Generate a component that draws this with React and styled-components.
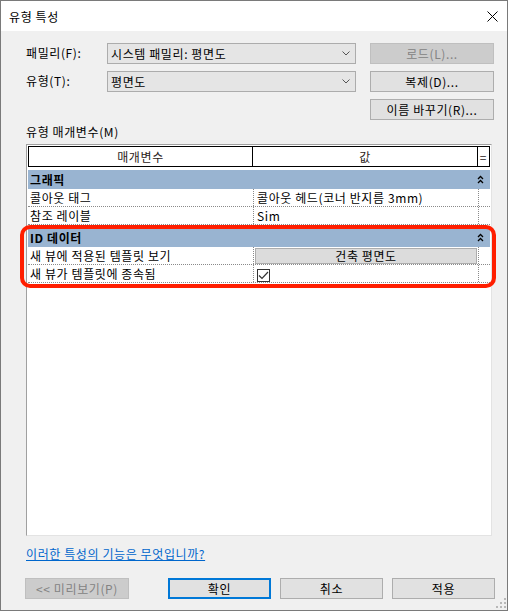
import React from "react";
import styled, { createGlobalStyle, css } from "styled-components";

const GlobalStyle = createGlobalStyle`
  html, body {
    margin: 0;
    padding: 0;
    background: #ffffff;
  }
`;

const Window = styled.div`
  position: relative;
  width: 508px;
  height: 611px;
  box-sizing: border-box;
  border: 1px solid #7a7a7a;
  background: #f0f0f0;
  display: flex;
  flex-direction: column;
  font-family: "Noto Sans CJK KR", "Noto Sans", sans-serif;
  font-size: 12px;
  letter-spacing: 0.6px;
  color: #000;
`;

const TitleBar = styled.div`
  height: 30px;
  background: #ffffff;
  display: flex;
  align-items: center;
  justify-content: space-between;
  padding: 0 9px 0 8px;
`;

const Title = styled.span`
  font-size: 12px;
`;

const Body = styled.div`
  flex: 1;
  display: flex;
  flex-direction: column;
  padding: 12px 12px 0 25px;
`;

const TopGrid = styled.div`
  display: grid;
  grid-template-columns: 67px 249px 124px;
  grid-auto-rows: 21px;
  column-gap: 14px;
  row-gap: 7px;
  align-items: center;
`;

const Label = styled.span`
  line-height: 16px;
  margin-top: -2px;
  white-space: nowrap;
`;

const Combo = styled.div`
  height: 21px;
  box-sizing: border-box;
  border: 1px solid #acacac;
  background: #e5e5e5;
  display: flex;
  align-items: center;
  justify-content: space-between;
  padding: 0 5px 0 3px;
`;

const Button = styled.button`
  height: 21px;
  width: ${(props) => props.width || 124}px;
  box-sizing: border-box;
  margin: 0;
  padding: 0;
  font-family: inherit;
  font-size: 12px;
  letter-spacing: inherit;
  color: #000;
  background: #e1e1e1;
  border: 1px solid #adadad;
  ${(props) =>
    props.disabled &&
    css`
      background: #cccccc;
      border-color: #bfbfbf;
      color: #838383;
    `}
  ${(props) =>
    props.primary &&
    css`
      border: 2px solid #0078d7;
    `}
`;

const SectionLabel = styled.div`
  margin-top: 4px;
  height: 16px;
  line-height: 16px;
`;

const Table = styled.div`
  margin-top: 4px;
  width: 466px;
  height: 392px;
  box-sizing: border-box;
  background: #ffffff;
  border-top: 1px solid #a0a0a0;
  border-left: 1px solid #a0a0a0;
  border-bottom: 1px solid #e3e3e3;
  border-right: 1px solid #e3e3e3;
  padding: 1px;
`;

const HeaderRow = styled.div`
  display: grid;
  grid-template-columns: 224px 225px 12px;
  height: 21px;
  box-sizing: border-box;
  border-top: 1px solid #000;
  border-bottom: 1px solid #000;
  border-left: 1px solid #000;
`;

const HeaderCell = styled.div`
  border-right: 1px solid #000;
  display: flex;
  align-items: center;
  justify-content: center;
  color: #2b2220;
  line-height: 1;
`;

const Group = styled.div`
  margin-top: 3px;
  position: relative;

  ${(props) =>
    props.highlight &&
    css`
      &::after {
        content: "";
        position: absolute;
        top: -3px;
        bottom: -5px;
        left: -8px;
        right: -6px;
        border: 4px solid #ff1e00;
        border-radius: 10px;
        pointer-events: none;
      }
    `}
`;

const GroupBar = styled.div`
  height: 19px;
  width: 462px;
  background: #99b4d1;
  display: flex;
  align-items: center;
  justify-content: space-between;
  padding: 0 6px 0 2px;
  box-sizing: border-box;
  font-weight: 700;
`;

const Row = styled.div`
  display: grid;
  grid-template-columns: 225px 225px 12px;
  height: 18px;
  box-sizing: border-box;
  border-bottom: 1px dotted #8a8a8a;
`;

const Cell = styled.div`
  display: flex;
  align-items: center;
  padding-left: ${(props) => (props.first ? 2 : 3)}px;
  border-left: ${(props) => (props.first ? "none" : "1px dotted #8a8a8a")};
  white-space: nowrap;
  overflow: hidden;
`;

const ValueButton = styled.div`
  flex: 1;
  height: 16px;
  margin: 0 1px 0 -2px;
  box-sizing: border-box;
  background: #dcdcdc;
  border: 1px solid #adadad;
  display: flex;
  align-items: center;
  justify-content: center;
`;

const CheckBox = styled.div`
  width: 13px;
  height: 13px;
  box-sizing: border-box;
  border: 1px solid #333;
  background: #fff;
  display: flex;
  align-items: center;
  justify-content: center;
  margin-top: 4px;
`;

const HelpLink = styled.a`
  margin-top: 10px;
  height: 16px;
  line-height: 16px;
  color: #0066cc;
  text-decoration: underline;
  align-self: flex-start;
`;

const Footer = styled.div`
  margin-top: 16px;
  display: flex;
  justify-content: space-between;
  margin-left: -1px;
`;

const ButtonGroup = styled.div`
  display: flex;
  gap: 9px;
`;

const Grip = styled.svg`
  position: absolute;
  right: 1px;
  bottom: 2px;
`;

function ChevronDown() {
  return (
    <svg width="8" height="5" viewBox="0 0 8 5">
      <polyline points="0.5,0.5 4,4 7.5,0.5" fill="none" stroke="#555" strokeWidth="1" />
    </svg>
  );
}

function Collapse() {
  return (
    <svg width="7" height="9" viewBox="0 0 7 9">
      <polyline points="1,4 3.5,1.5 6,4" fill="none" stroke="#000" strokeWidth="1.3" />
      <polyline points="1,8 3.5,5.5 6,8" fill="none" stroke="#000" strokeWidth="1.3" />
    </svg>
  );
}

function CloseIcon() {
  return (
    <svg width="11" height="11" viewBox="0 0 11 11">
      <path d="M0.5 0.5 L10.5 10.5 M10.5 0.5 L0.5 10.5" stroke="#000" strokeWidth="1" />
    </svg>
  );
}

function Check() {
  return (
    <svg width="11" height="9" viewBox="0 0 11 9">
      <polyline points="1,4.5 4,7.5 10,1" fill="none" stroke="#333" strokeWidth="1.2" />
    </svg>
  );
}

const groups = [
  {
    name: "그래픽",
    rows: [
      { label: "콜아웃 태그", value: "콜아웃 헤드(코너 반지름 3mm)" },
      { label: "참조 레이블", value: "Sim" },
    ],
  },
  {
    name: "ID 데이터",
    highlight: true,
    rows: [
      { label: "새 뷰에 적용된 템플릿 보기", value: "건축 평면도", kind: "button" },
      { label: "새 뷰가 템플릿에 종속됨", kind: "check" },
    ],
  },
];

function ValueContent({ row }) {
  if (row.kind === "button") return <ValueButton>{row.value}</ValueButton>;
  if (row.kind === "check")
    return (
      <CheckBox>
        <Check />
      </CheckBox>
    );
  return row.value;
}

export default function App() {
  return (
    <>
      <GlobalStyle />
      <Window>
        <TitleBar>
          <Title>유형 특성</Title>
          <CloseIcon />
        </TitleBar>
        <Body>
          <TopGrid>
            <Label>패밀리(F):</Label>
            <Combo>
              <span>시스템 패밀리: 평면도</span>
              <ChevronDown />
            </Combo>
            <Button disabled>로드(L)...</Button>

            <Label>유형(T):</Label>
            <Combo>
              <span>평면도</span>
              <ChevronDown />
            </Combo>
            <Button>복제(D)...</Button>

            <span />
            <span />
            <Button>이름 바꾸기(R)...</Button>
          </TopGrid>

          <SectionLabel>유형 매개변수(M)</SectionLabel>
          <Table>
            <HeaderRow>
              <HeaderCell>매개변수</HeaderCell>
              <HeaderCell>값</HeaderCell>
              <HeaderCell>=</HeaderCell>
            </HeaderRow>
            {groups.map((group) => (
              <Group key={group.name} highlight={group.highlight}>
                <GroupBar>
                  <span>{group.name}</span>
                  <Collapse />
                </GroupBar>
                {group.rows.map((row) => (
                  <Row key={row.label}>
                    <Cell first>{row.label}</Cell>
                    <Cell>
                      <ValueContent row={row} />
                    </Cell>
                    <Cell />
                  </Row>
                ))}
              </Group>
            ))}
          </Table>

          <HelpLink href="#">이러한 특성의 기능은 무엇입니까?</HelpLink>

          <Footer>
            <Button disabled width={104}>
              &lt;&lt; 미리보기(P)
            </Button>
            <ButtonGroup>
              <Button primary width={103}>
                확인
              </Button>
              <Button width={103}>취소</Button>
              <Button width={103}>적용</Button>
            </ButtonGroup>
          </Footer>
        </Body>
        <Grip width="10" height="10" viewBox="0 0 10 10">
          <g fill="#b8b8b8">
            <rect x="8" y="0" width="2" height="2" />
            <rect x="4" y="4" width="2" height="2" />
            <rect x="8" y="4" width="2" height="2" />
            <rect x="0" y="8" width="2" height="2" />
            <rect x="4" y="8" width="2" height="2" />
            <rect x="8" y="8" width="2" height="2" />
          </g>
        </Grip>
      </Window>
    </>
  );
}
